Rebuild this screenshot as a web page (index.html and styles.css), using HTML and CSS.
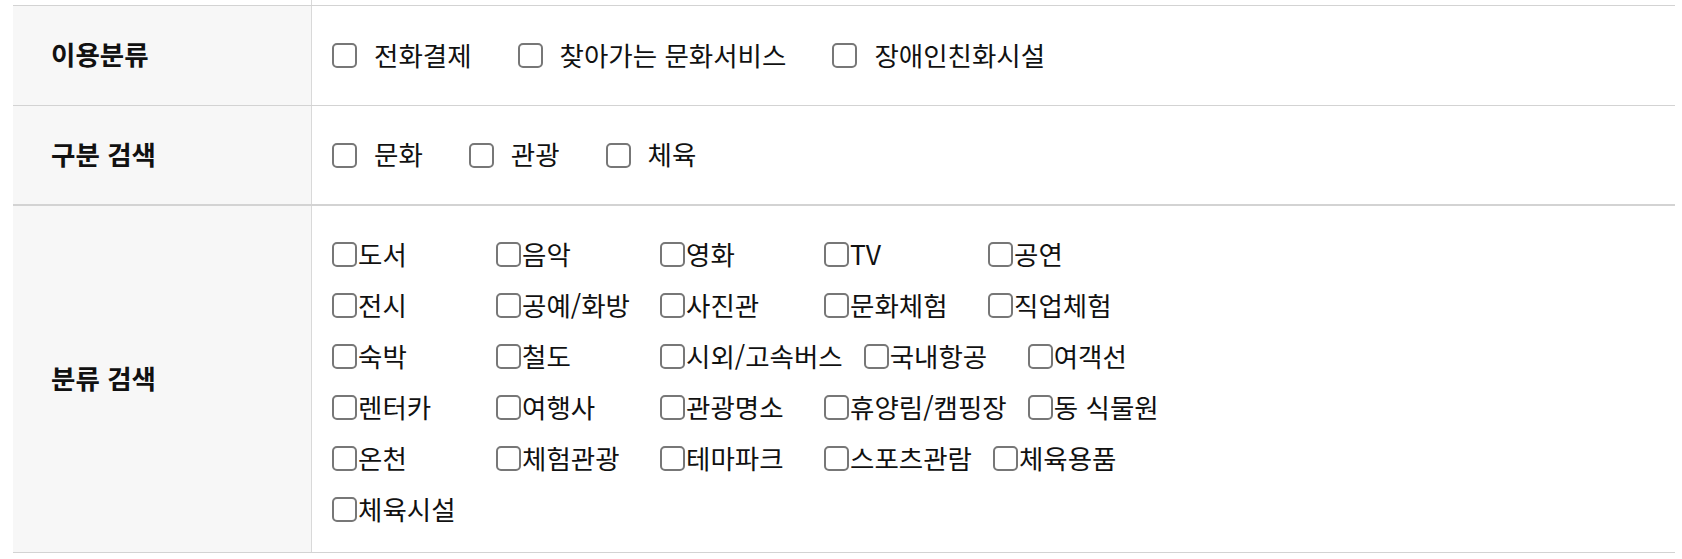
FILE: index.html
```html
<!DOCTYPE html>
<html lang="ko">
<head>
    <meta charset="UTF-8">
    <meta name="viewport" content="width=device-width, initial-scale=1.0">
    <title>검색 조건</title>
    <link rel="stylesheet" href="styles.css">
</head>
<body>
    <div class="search-box">
        <div class="row row-stub">
            <div class="head"></div>
            <div class="body"></div>
        </div>

        <div class="row row-use">
            <div class="head">이용분류</div>
            <div class="body">
                <label class="opt"><input type="checkbox"><span>전화결제</span></label>
                <label class="opt"><input type="checkbox"><span>찾아가는 문화서비스</span></label>
                <label class="opt"><input type="checkbox"><span>장애인친화시설</span></label>
            </div>
        </div>

        <div class="row row-type">
            <div class="head">구분 검색</div>
            <div class="body">
                <label class="opt"><input type="checkbox"><span>문화</span></label>
                <label class="opt"><input type="checkbox"><span>관광</span></label>
                <label class="opt"><input type="checkbox"><span>체육</span></label>
            </div>
        </div>

        <div class="row row-cat">
            <div class="head">분류 검색</div>
            <div class="body cat-body">
                <div class="cat-line">
                    <label class="cat"><input type="checkbox"><span>도서</span></label>
                    <label class="cat"><input type="checkbox"><span>음악</span></label>
                    <label class="cat"><input type="checkbox"><span>영화</span></label>
                    <label class="cat"><input type="checkbox"><span>TV</span></label>
                    <label class="cat"><input type="checkbox"><span>공연</span></label>
                </div>
                <div class="cat-line">
                    <label class="cat"><input type="checkbox"><span>전시</span></label>
                    <label class="cat"><input type="checkbox"><span>공예/화방</span></label>
                    <label class="cat"><input type="checkbox"><span>사진관</span></label>
                    <label class="cat"><input type="checkbox"><span>문화체험</span></label>
                    <label class="cat"><input type="checkbox"><span>직업체험</span></label>
                </div>
                <div class="cat-line">
                    <label class="cat"><input type="checkbox"><span>숙박</span></label>
                    <label class="cat"><input type="checkbox"><span>철도</span></label>
                    <label class="cat"><input type="checkbox"><span>시외/고속버스</span></label>
                    <label class="cat"><input type="checkbox"><span>국내항공</span></label>
                    <label class="cat"><input type="checkbox"><span>여객선</span></label>
                </div>
                <div class="cat-line">
                    <label class="cat"><input type="checkbox"><span>렌터카</span></label>
                    <label class="cat"><input type="checkbox"><span>여행사</span></label>
                    <label class="cat"><input type="checkbox"><span>관광명소</span></label>
                    <label class="cat"><input type="checkbox"><span>휴양림/캠핑장</span></label>
                    <label class="cat"><input type="checkbox"><span>동 식물원</span></label>
                </div>
                <div class="cat-line">
                    <label class="cat"><input type="checkbox"><span>온천</span></label>
                    <label class="cat"><input type="checkbox"><span>체험관광</span></label>
                    <label class="cat"><input type="checkbox"><span>테마파크</span></label>
                    <label class="cat"><input type="checkbox"><span>스포츠관람</span></label>
                    <label class="cat"><input type="checkbox"><span>체육용품</span></label>
                </div>
                <div class="cat-line">
                    <label class="cat"><input type="checkbox"><span>체육시설</span></label>
                </div>
            </div>
        </div>
    </div>
</body>
</html>
```

FILE: styles.css
```css
* {
    box-sizing: border-box;
}
body {
    margin: 0;
    font-family: "Noto Sans CJK KR", "Noto Sans", sans-serif;
    color: #111;
    background: #fff;
}
.search-box {
    margin: 0 7px 0 13px;
}
.row {
    display: grid;
    grid-template-columns: 299px 1fr;
    border-bottom: 1px solid #d3d3d3;
}
.head {
    display: flex;
    align-items: center;
    padding-left: 38px;
    padding-bottom: 4px;
    background: #f7f7f7;
    border-right: 1px solid #d9d9d9;
    font-size: 26.5px;
    font-weight: 700;
}
.body {
    display: flex;
    align-items: center;
    padding-left: 20px;
    font-size: 26.5px;
}
.row-stub {
    height: 6px;
}
.row-stub .head {
    padding-bottom: 0;
    background: #fff;
}
.row-use {
    height: 100px;
}
.row-type {
    height: 99px;
}
.row-cat {
    border-top: 1px solid #d3d3d3;
}
input[type="checkbox"] {
    appearance: none;
    flex: none;
    width: 25px;
    height: 25px;
    margin: 0;
    background: #fff;
    border: 2px solid #777;
    border-radius: 5px;
}
.opt span,
.cat span {
    padding-bottom: 3px;
}
.opt {
    display: flex;
    align-items: center;
    margin-right: 46px;
}
.opt input {
    margin-right: 17px;
}
.cat-body {
    display: block;
    padding: 23px 20px 17px;
}
.cat-line {
    display: flex;
    align-items: center;
    height: 51px;
}
.cat {
    display: flex;
    align-items: center;
    min-width: 164px;
    padding-right: 21px;
}
.cat input {
    margin-right: 1px;
}
```
